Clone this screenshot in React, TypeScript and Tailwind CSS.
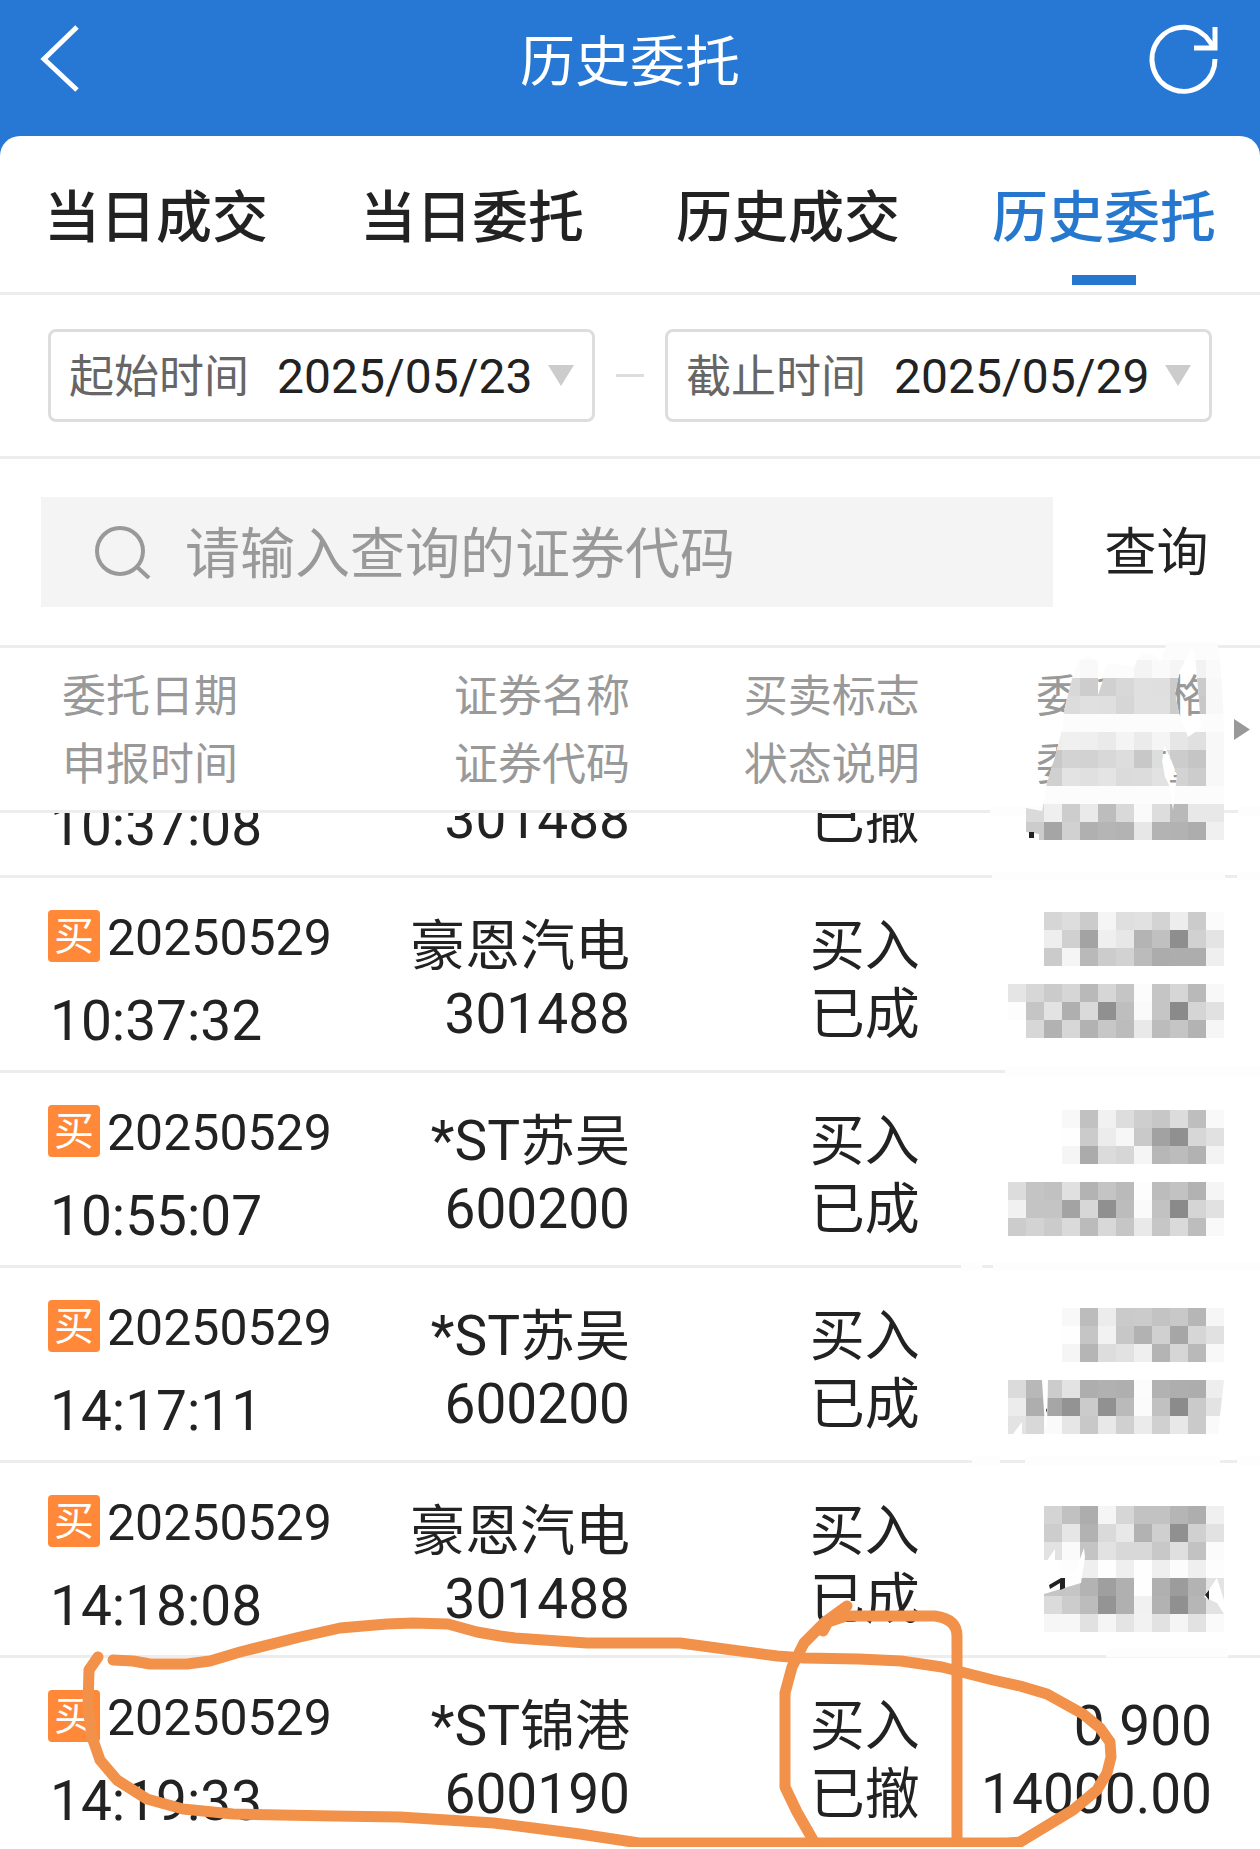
import React from "react";

const tabs = ['当日成交', '当日委托', '历史成交', '历史委托'];

const columns = [
    ['委托日期', '申报时间'],
    ['证券名称', '证券代码'],
    ['买卖标志', '状态说明'],
    ['委托价格', '委托数量'],
];

const orders = [
    { date: '20250529', time: '10:37:32', name: '豪恩汽电', code: '301488', side: '买入', status: '已成' },
    { date: '20250529', time: '10:55:07', name: '*ST苏吴', code: '600200', side: '买入', status: '已成' },
    { date: '20250529', time: '14:17:11', name: '*ST苏吴', code: '600200', side: '买入', status: '已成' },
    { date: '20250529', time: '14:18:08', name: '豪恩汽电', code: '301488', side: '买入', status: '已成' },
    { date: '20250529', time: '14:19:33', name: '*ST锦港', code: '600190', side: '买入', status: '已撤', price: '0.900', amount: '14000.00' },
];

// 马赛克：每行 [y, 起始列, 灰度值]
type MosaicRow = [number, number, string];

const headMosaic: MosaicRow[] = [
    [660, 4, 'f9 fc fc f4 fa f5 f2 fa'],
    [678, 3, 'd8 cd d0 d8 e0 df cb cb f8'],
    [696, 3, 'dc e0 df d6 e0 e0 cc c8 f8'],
    [732, 2, 'ee f0 ef ea f4 eb f5 e6 e0 f8'],
    [750, 2, 'c8 d3 d2 d8 dd c8 dd cc c5 f8'],
    [768, 2, 'd0 e3 e0 e4 db dc e2 d3 cc f8'],
    [804, 1, 'da ef cd ea bd d9 fa dd b9 e8 e8'],
    [822, 1, 'cc a5 d1 b0 b5 b3 e7 b3 b2 ad f0'],
];

const bodyMosaic: MosaicRow[] = [
    [912, 2, 'd6 dd cb f5 df e1 d3 ed cb fb'],
    [930, 2, 'ee d0 a3 ef e7 b4 c0 8e d1 e4'],
    [948, 2, 'cb f5 b9 cc d2 bb ac ad ad ef'],
    [984, 0, 'e5 d7 cb d6 b9 d6 c5 fc c5 d6 b9 f8'],
    [1002, 0, 'fd c5 e3 af da 90 be fa c5 8a d5 e1'],
    [1020, 1, 'd7 b2 d7 b2 c7 bc e9 bc c5 b3 f6'],
    [1110, 3, 'f8 c1 f1 dd ce c7 dc be f9'],
    [1128, 3, 'fe cb ec f7 c9 a2 90 d7 e1'],
    [1146, 3, 'f5 ab db d6 f5 b7 bc b2 f3'],
    [1182, 0, 'dc c4 c1 e0 b3 c4 ba fd bc c2 b2 f5'],
    [1200, 0, 'f1 c4 c4 a3 d7 90 bc fa c2 8a d5 e1'],
    [1218, 0, 'cc d3 cb da bb d8 c6 e9 c6 da bd f9'],
    [1308, 3, 'f8 bc ec ca cb c3 c8 b6 f6'],
    [1326, 3, 'fe c5 f2 c7 b2 d0 a6 d6 e1'],
    [1344, 3, 'f5 b5 dd e2 ef b4 d6 b9 f8'],
    [1380, 0, 'db b8 cc e3 ae b1 af fc b2 ae ad ee'],
    [1398, 0, 'ec ae a6 93 cb 91 ba fb c1 8b ca e3'],
    [1416, 0, 'e3 d8 fa e6 c8 e8 d0 eb d0 e8 ca fa'],
    [1506, 2, 'd4 c1 ad f5 d6 c2 c2 b5 ae f0'],
    [1524, 2, 'cd e6 b2 da e8 b2 cf 90 d0 e2'],
    [1542, 2, 'e2 fa c4 e2 d8 d8 c8 df c2 fb'],
    [1560, 2, 'fe fd ef fe ef fe ef fc ef fd'],
    [1578, 2, 'c5 c5 b3 9f b0 fe b0 9c b3 e3'],
    [1596, 2, 'db cc bc 94 b0 f1 b2 90 b6 e2'],
    [1614, 2, 'f6 f7 e1 f5 e4 f2 e2 f5 e2 fa'],
];

function Mosaic({ rows }: { rows: MosaicRow[] }) {
    return (
        <g shapeRendering="crispEdges">
            {rows.map(([y, start, grays]) =>
                grays.split(' ').map((gray, i) => (
                    <rect key={`${y}-${i}`} x={1008 + (start + i) * 18} y={y} width="18" height="18" fill={`#${gray}${gray}${gray}`} />
                ))
            )}
        </g>
    );
}

function Markup() {
    return (
        <svg viewBox="0 0 1260 1849" className="absolute left-0 top-0 w-full pointer-events-none" aria-hidden="true">
            <defs>
                <clipPath id="head-brush">
                    <path
                        clipRule="evenodd"
                        d="M1026 808L1042 811L1047 783L1055 757L1062 730L1065 707L1073 675L1078 662Q1088 652 1098 662L1098 695L1103 680Q1104 662 1114 664L1135 667Q1138 653 1148 653Q1156 654 1160 662L1167 643H1217L1220 657L1224 723V840H1039V834L1026 832Z
                        M1192 647L1195 655L1199 700L1201 728L1188 737L1179 713L1175 693L1180 670Z
                        M1164 745L1170 757L1177 775L1173 810L1169 785L1165 777L1162 760Z"
                    />
                </clipPath>
            </defs>

            {/* 涂抹掉的分隔线 */}
            <g stroke="#fdfdfd" strokeWidth="9">
                <path d="M1166 646H1216M990 811H1224M1238 811H1260M992 876H1225M1237 876H1260M1005 1071H1260" />
                <path d="M961 1266H982M993 1266H1260M972 1461H1000M1025 1461H1220M1237 1461H1260M1106 1653H1228" />
            </g>

            <g clipPath="url(#head-brush)">
                <rect x="1008" y="640" width="252" height="200" fill="#fcfcfc" />
                <Mosaic rows={headMosaic} />
            </g>
            <rect x="1029" y="832" width="5" height="6" fill="#222" />

            <Mosaic rows={bodyMosaic} />
            <g fill="#fff">
                <path d="M1042 1380H1048L1047 1427H1045ZM1224 1380L1218 1434H1224ZM1013 1434L1022 1422V1434Z" />
                <path d="M1044 1565L1055 1549V1567L1067 1575L1077 1567L1084 1548L1085 1557L1081 1583L1044 1594Z" />
                <path d="M1217 1578L1224 1600V1614L1217 1603L1204 1597Z" />
            </g>
            <path d="M1049 1585L1061 1578H1065V1588L1060 1590V1583L1050 1589ZM1205 1595L1209 1590V1600ZM1046 1410L1047 1408V1413Z" fill="#222" />

            {/* 手绘标注 */}
            <g fill="none" stroke="#f2914a" strokeWidth="11" strokeLinecap="round" strokeLinejoin="round">
                <path d="M113 1660L133 1661L150 1664H187L210 1661L240 1652L300 1637L340 1628L387 1624L413 1623L448 1624L477 1632L500 1636L515 1638L587 1643H680L777 1656L804 1658L859 1659L901 1661L942 1667L993 1680L1020 1686L1047 1694L1083 1714L1100 1728L1110 1742L1111 1757L1107 1773L1097 1790L1073 1810L1020 1842L1007 1843H639L580 1834L494 1823L400 1817L333 1816L233 1814L183 1809L147 1799L117 1780L100 1760L92 1737L88 1707L89 1670L98 1657" />
                <path d="M847 1606L825 1622L804 1643L792 1667L785 1693V1787L797 1812L813 1840" />
                <path d="M823 1631L828 1622L846 1616H935Q957 1619 957 1636V1838" />
            </g>
        </svg>
    );
}

function DateField({ id, label, value }: { id: string; label: string; value: string }) {
    return (
        <div className="flex-1 min-w-0 h-[93px] flex items-center border-3 border-[#ddd] rounded-lg px-[18px]">
            <label htmlFor={id} className="shrink-0 pt-1 text-[45px] leading-[60px] text-[#666]">{label}</label>
            <select id={id} defaultValue={value} className="flex-1 min-w-0 ml-7 pt-0.5 appearance-none bg-transparent text-[48px] leading-[60px] text-[#222] outline-none">
                <option value={value}>{value}</option>
            </select>
            <svg viewBox="0 0 26 21" className="w-[26px] h-[21px] shrink-0" aria-hidden="true">
                <path d="M0 0H26L13 21Z" fill="#ccc" />
            </svg>
        </div>
    );
}

export default function App() {
    return (
        <div className="relative overflow-hidden bg-[#2678d4] text-[#222] font-[Roboto,'Noto_Sans_CJK_SC',sans-serif]">
            {/* 顶部导航 */}
            <header className="h-[120px] mb-4 px-10 flex items-center justify-between text-white">
                <button type="button" aria-label="返回">
                    <svg viewBox="0 0 72 72" className="w-[72px] h-[72px]" fill="none" stroke="currentColor" strokeWidth="5">
                        <path d="M37 3L4 35L37 66" />
                    </svg>
                </button>
                <h1 className="pt-1 text-[55px] leading-[68px]">历史委托</h1>
                <button type="button" aria-label="刷新">
                    <svg viewBox="0 0 72 72" className="w-[72px] h-[72px]" fill="none" stroke="currentColor" strokeWidth="5">
                        <path d="M67 35A31.500 32 0 1 1 62 18L66 24" />
                        <path d="M67 3V24H46" />
                    </svg>
                </button>
            </header>

            <main className="bg-white rounded-t-[20px]">
                {/* 标签页 */}
                <nav className="px-11 flex justify-between border-b-3 border-[#ededed]">
                    {tabs.map((tab, i) => {
                        const active = i === tabs.length - 1;
                        return (
                            <button
                                key={tab}
                                type="button"
                                aria-current={active ? 'page' : undefined}
                                className={`relative h-[156px] pt-2 text-[56px] leading-[68px] font-medium ${active ? 'text-[#2678cf]' : ''}`}
                            >
                                {tab}
                                {active && <span className="absolute bottom-[7px] left-1/2 -translate-x-1/2 w-16 h-[10px] bg-[#2678cf]" />}
                            </button>
                        );
                    })}
                </nav>

                {/* 日期范围 */}
                <section className="px-12 py-[34px] flex items-center border-b-3 border-[#ededed]">
                    <DateField id="start" label="起始时间" value="2025/05/23" />
                    <span className="w-7 h-[3px] mx-[21px] bg-[#ddd]" />
                    <DateField id="end" label="截止时间" value="2025/05/29" />
                </section>

                {/* 搜索 */}
                <form className="pl-[41px] py-[38px] flex items-center border-b-3 border-[#ededed]" onSubmit={e => e.preventDefault()}>
                    <div className="flex-1 min-w-0 h-[110px] pl-[54px] flex items-center bg-[#f4f4f4]">
                        <svg viewBox="0 0 58 54" className="w-[58px] h-[54px] shrink-0" fill="none" stroke="#999" strokeWidth="4" aria-hidden="true">
                            <circle cx="25" cy="26" r="23" />
                            <path d="M42 42L54 53" />
                        </svg>
                        <input
                            type="text"
                            aria-label="证券代码"
                            placeholder="请输入查询的证券代码"
                            className="flex-1 min-w-0 h-full ml-8 pt-1 bg-transparent text-[55px] placeholder:text-[#999] outline-none"
                        />
                    </div>
                    <button type="submit" className="w-[207px] pt-1 text-[52px] leading-[68px]">查询</button>
                </form>

                {/* 委托列表 */}
                <div className="relative">
                    <table className="w-full table-fixed border-separate border-spacing-0 text-right">
                        <colgroup>
                            <col className="w-[27%]" />
                            <col className="w-[23%]" />
                            <col className="w-[23%]" />
                            <col className="w-[27%]" />
                        </colgroup>
                        <thead>
                            <tr>
                                {columns.map(([top, bottom]) => (
                                    <th
                                        key={top}
                                        className="h-[165px] p-0 pt-1 border-b-3 border-[#ededed] text-[44px] leading-[68px] font-normal text-[#999] first:pl-[62px] first:text-left last:pr-12"
                                    >
                                        <div>{top}</div>
                                        <div>{bottom}</div>
                                    </th>
                                ))}
                            </tr>
                        </thead>
                        <tbody className="text-[55px] leading-[68px]">
                            {/* 滚动到一半的行 */}
                            <tr>
                                <td className="p-0 pl-[50px] border-b-3 border-[#ededed] text-left">
                                    <div className="h-[62px] pb-[15px] flex flex-col justify-end overflow-hidden">10:37:08</div>
                                </td>
                                <td className="p-0 border-b-3 border-[#ededed]">
                                    <div className="h-[62px] pb-[22px] flex flex-col justify-end overflow-hidden">301488</div>
                                </td>
                                <td className="p-0 border-b-3 border-[#ededed]">
                                    <div className="h-[62px] pb-[22px] flex flex-col justify-end overflow-hidden">已撤</div>
                                </td>
                                <td className="p-0 border-b-3 border-[#ededed]" />
                            </tr>
                            {orders.map(order => (
                                <tr key={order.time} className="group align-top">
                                    <td className="p-0 pl-12 pt-8 pb-[15px] border-b-3 border-[#ededed] text-left group-last:border-b-0 group-last:pb-3">
                                        <div className="flex items-center gap-[7px]">
                                            <span className="w-[52px] h-[52px] rounded-[4px] bg-[#ff8938] text-white text-[40px] leading-[54px] text-center">买</span>
                                            <span className="h-[52px] pt-0.5 text-[50px] leading-[52px]">{order.date}</span>
                                        </div>
                                        <div className="mt-[25px] pl-0.5">{order.time}</div>
                                    </td>
                                    <td className="p-0 pt-[34px] border-b-3 border-[#ededed] group-last:border-b-0">
                                        <div>{order.name}</div>
                                        <div>{order.code}</div>
                                    </td>
                                    <td className="p-0 pt-[34px] border-b-3 border-[#ededed] group-last:border-b-0">
                                        <div>{order.side}</div>
                                        <div>{order.status}</div>
                                    </td>
                                    <td className="p-0 pt-[34px] pr-12 border-b-3 border-[#ededed] group-last:border-b-0">
                                        <div>{order.price}</div>
                                        <div>{order.amount}</div>
                                    </td>
                                </tr>
                            ))}
                        </tbody>
                    </table>
                    <svg viewBox="0 0 16 21" className="absolute right-[10px] top-[71px] w-4 h-[21px]" aria-hidden="true">
                        <path d="M0 0L16 10.500L0 21Z" fill="#999" />
                    </svg>
                </div>
            </main>

            <Markup />
        </div>
    );
}
